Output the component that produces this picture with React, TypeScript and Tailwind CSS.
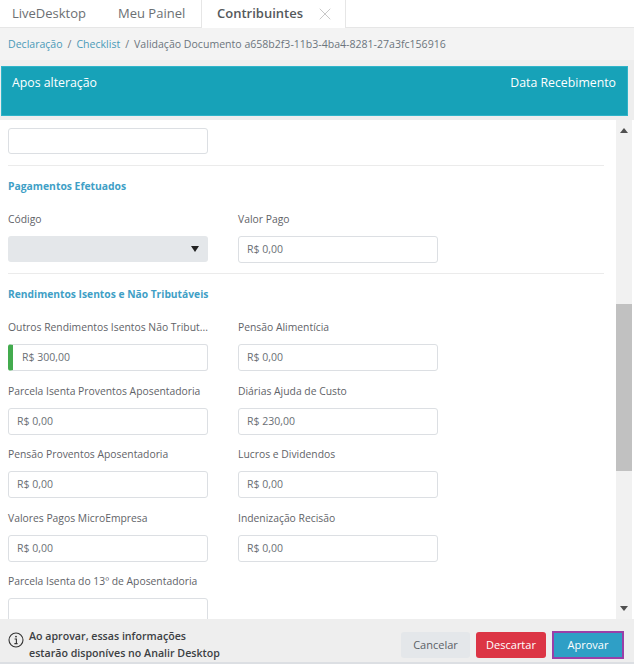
import { X } from "lucide-react";

function Field({ label, value, changed }: { label: string; value?: string; changed?: boolean }) {
  return (
    <div className="w-[200px]">
      <div className="h-[18px] whitespace-nowrap text-[10.35px] leading-[19px] text-[#5f6368]">{label}</div>
      <div
        className={`mt-[8px] flex h-[27px] items-center rounded-[3px] border border-[#dcdfe3] bg-white pt-px text-[10.5px] text-[#6b7075] ${
          changed ? "border-l-[5px] border-l-[#43ab4e] pl-[9px]" : "pl-2"
        }`}
      >
        {value}
      </div>
    </div>
  );
}

const rows = [
  [
    { label: "Outros Rendimentos Isentos Não Tribut...", value: "R$ 300,00", changed: true },
    { label: "Pensão Alimentícia", value: "R$ 0,00" },
  ],
  [
    { label: "Parcela Isenta Proventos Aposentadoria", value: "R$ 0,00" },
    { label: "Diárias Ajuda de Custo", value: "R$ 230,00" },
  ],
  [
    { label: "Pensão Proventos Aposentadoria", value: "R$ 0,00" },
    { label: "Lucros e Dividendos", value: "R$ 0,00" },
  ],
  [
    { label: "Valores Pagos MicroEmpresa", value: "R$ 0,00" },
    { label: "Indenização Recisão", value: "R$ 0,00" },
  ],
];

export default function App() {
  return (
    <div className="flex h-[664px] w-[634px] flex-col overflow-hidden bg-white font-['Open_Sans',sans-serif]">
      {/* tabs */}
      <div className="flex h-[28px] shrink-0 border-b border-[#e6e6e6] text-[13px] text-[#6b6f73]">
        <div className="w-[103px] pl-3 leading-[26px]">LiveDesktop</div>
        <div className="w-[98px] pl-[15px] leading-[26px]">Meu Painel</div>
        <div className="-mb-px flex w-[145px] items-center border-x border-[#e6e6e6] bg-white pl-[15px] font-semibold text-[#55595c]">
          Contribuintes
          <X size={20} strokeWidth={0.9} className="ml-[12px] text-[#b5b5b5]" />
        </div>
      </div>

      {/* breadcrumb */}
      <div className="flex h-[32px] shrink-0 items-center gap-[5px] bg-[#f3f3f3] pl-[8px] pt-px text-[10.55px] text-[#6c757d]">
        <span className="text-[#4a9ab8]">Declaração</span>
        <span>/</span>
        <span className="text-[#4a9ab8]">Checklist</span>
        <span>/</span>
        <span>Validação Documento a658b2f3-11b3-4ba4-8281-27a3fc156916</span>
      </div>

      {/* banner */}
      <div className="shrink-0 bg-[#eeeeee] pb-[4px] pl-px pr-[6px] pt-[6px]">
        <div className="flex h-[50px] justify-between border border-[#2fb3c8] bg-[#17a2b8] pl-[10px] pr-[11px] pt-[7px] text-[12.3px] leading-[18px] text-white">
          <span>Apos alteração</span>
          <span>Data Recebimento</span>
        </div>
      </div>

      {/* scroll area */}
      <div className="flex min-h-0 flex-1">
        <div className="flex-1 overflow-hidden bg-white pl-2 pr-[12px] pt-2">
          <div className="h-[26px] w-[200px] rounded-[3px] border border-[#dcdfe3]" />
          <div className="mt-[11px] border-t border-[#ebebeb] pt-[13px] text-[10.35px] font-bold leading-[15px] text-[#3f9fc6]">
            Pagamentos Efetuados
          </div>
          <div className="mt-[16px] flex gap-[30px]">
            <div className="w-[200px]">
              <div className="h-[18px] text-[10.35px] leading-[19px] text-[#5f6368]">Código</div>
              <div className="relative mt-[8px] h-[26px] rounded-[3px] bg-[#e4e7ea]">
                <span className="absolute right-[9px] top-[10px] h-0 w-0 border-x-[4px] border-t-[6px] border-x-transparent border-t-[#222]" />
              </div>
            </div>
            <Field label="Valor Pago" value="R$ 0,00" />
          </div>
          <div className="mt-[10px] border-t border-[#ebebeb] pt-[13px] text-[10.25px] font-bold leading-[15px] text-[#3f9fc6]">
            Rendimentos Isentos e Não Tributáveis
          </div>
          <div className="mt-[16px] flex flex-col gap-[10.5px]">
            {rows.map((row) => (
              <div key={row[0].label} className="flex gap-[30px]">
                {row.map((field) => (
                  <Field key={field.label} {...field} />
                ))}
              </div>
            ))}
            <Field label="Parcela Isenta do 13º de Aposentadoria" />
            <div className="h-5" />
          </div>
        </div>

        {/* scrollbar */}
        <div className="flex w-[16px] shrink-0 flex-col items-center bg-[#f1f1f1] pt-[8px]">
          <span className="h-0 w-0 border-x-[4px] border-b-[5px] border-x-transparent border-b-[#505050]" />
          <div className="mt-[171px] h-[167px] w-full bg-[#c1c1c1]" />
          <span className="mt-[135px] h-0 w-0 border-x-[4px] border-t-[5px] border-x-transparent border-t-[#505050]" />
        </div>
        <div className="w-[2px] shrink-0 bg-white" />
      </div>

      {/* footer */}
      <div className="flex h-[45px] shrink-0 items-start border-b-2 border-[#dcdfe3] bg-[#eeeeee] pl-2 pr-[10px]">
        <svg viewBox="0 0 16 16" className="mt-[13px] h-[16px] w-[16px] shrink-0 text-[#333]" fill="none" stroke="currentColor">
          <circle cx="8" cy="8" r="7" strokeWidth="1.1" />
          <circle cx="8" cy="4.6" r="0.9" fill="currentColor" stroke="none" />
          <path d="M6.6 7h1.8v4.4M6.4 11.6h3.2" strokeWidth="1.1" />
        </svg>
        <div className="ml-[5px] mt-[9px] text-[10.65px] font-semibold leading-[17px] text-[#3c4043]">
          <div>Ao aprovar, essas informações</div>
          <div>estarão disponíves no Analir Desktop</div>
        </div>
        <div className="ml-auto mt-[12px] flex items-center gap-[6px] text-[11px]">
          <button className="h-[26px] w-[69px] rounded-[3px] bg-[#e4e7ea] text-[#5b6166]">Cancelar</button>
          <button className="h-[26px] w-[70px] rounded-[3px] bg-[#dc3545] text-white">Descartar</button>
          <button className="h-[28px] w-[72px] border-2 border-[#9b3fa8] bg-[#2f9fc6] text-white">Aprovar</button>
        </div>
      </div>
    </div>
  );
}
